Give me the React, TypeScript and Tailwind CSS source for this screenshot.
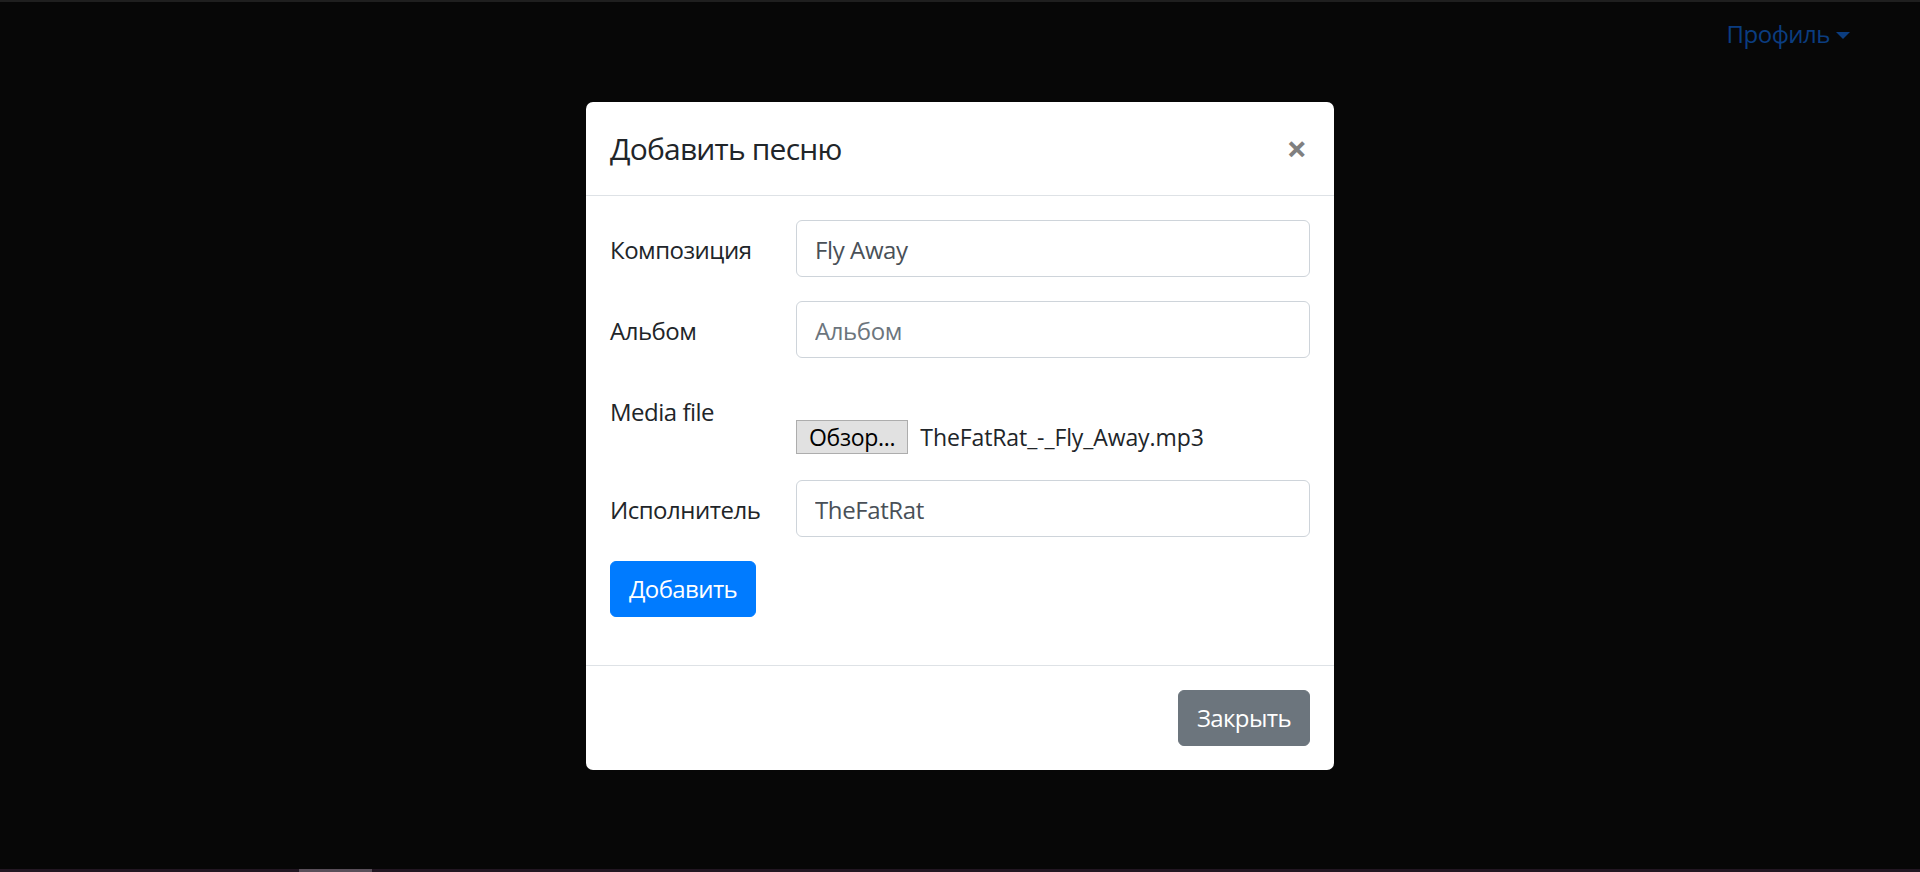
import { useState } from 'react'

const font = { fontFamily: '"Open Sans", "Noto Sans", sans-serif' }

interface RowProps {
  label: string
  children: React.ReactNode
}

function FormRow({ label, children }: RowProps) {
  return (
    <div className="flex mb-6">
      <label className="w-[186px] shrink-0 pt-[12px] text-[24px] leading-[36px] tracking-[-0.5px] text-[#212529]">
        {label}
      </label>
      <div className="flex-1">{children}</div>
    </div>
  )
}

function TextInput({
  value,
  placeholder,
  onChange,
}: {
  value: string
  placeholder: string
  onChange: (v: string) => void
}) {
  return (
    <input
      className="block w-full h-[57px] px-[18px] pt-[2px] text-[24px] leading-[36px] tracking-[-0.4px] text-[#495057] placeholder:text-[#6c757d] bg-white border border-[#ced4da] rounded-[6px] outline-none"
      style={font}
      value={value}
      placeholder={placeholder}
      onChange={(e) => onChange(e.target.value)}
    />
  )
}

export default function App() {
  const [form, setForm] = useState({
    title: 'Fly Away',
    album: '',
    artist: 'TheFatRat',
  })

  return (
    <div className="relative flex flex-col h-[872px] bg-[#070707] overflow-hidden" style={font}>
      <div className="h-[2px] bg-[#1f1f1f]" />

      {/* navbar under the backdrop */}
      <div className="flex justify-end pr-[70px] pt-[14px]">
        <a className="flex items-center text-[24px] leading-[36px] tracking-[-0.5px] text-[#0b3d80] cursor-pointer">
          Профиль
          <span className="ml-[6px] mt-[2px] w-0 h-0 border-x-[7px] border-x-transparent border-t-[7px] border-t-[#0b3d80]" />
        </a>
      </div>

      <div className="flex-1" />
      <div className="h-[3px] bg-[#221622]">
        <div className="ml-[299px] w-[73px] h-full bg-[#5a4f5a]" />
      </div>

      {/* modal */}
      <div className="absolute inset-0 flex items-center justify-center">
        <div className="w-[748px] bg-white rounded-[7px] flex flex-col">
          <div className="flex items-start justify-between px-6 py-6 border-b border-[#dee2e6]">
            <h5 className="text-[30px] leading-[45px] font-normal tracking-[-0.8px] text-[#212529]">
              Добавить песню
            </h5>
            <button className="text-[36px] leading-[36px] font-bold text-[#808080] mt-[5px] mr-[3px]">
              ×
            </button>
          </div>

          <div className="px-6 pt-6 pb-6">
            <form className="mb-6" onSubmit={(e) => e.preventDefault()}>
              <FormRow label="Композиция">
                <TextInput
                  value={form.title}
                  placeholder="Композиция"
                  onChange={(v) => setForm({ ...form, title: v })}
                />
              </FormRow>
              <FormRow label="Альбом">
                <TextInput
                  value={form.album}
                  placeholder="Альбом"
                  onChange={(v) => setForm({ ...form, album: v })}
                />
              </FormRow>
              <FormRow label="Media file">
                <div className="pt-[38px] pb-[2px] flex items-center">
                  <span className="h-[34px] px-[12px] flex items-center bg-[#e1e1e1] border border-[#adadad] text-[23px] tracking-[-0.3px] text-black">
                    Обзор...
                  </span>
                  <span className="ml-[12px] text-[23px] tracking-[-0.1px] text-[#212529]">
                    TheFatRat_-_Fly_Away.mp3
                  </span>
                </div>
              </FormRow>
              <FormRow label="Исполнитель">
                <TextInput
                  value={form.artist}
                  placeholder="Исполнитель"
                  onChange={(v) => setForm({ ...form, artist: v })}
                />
              </FormRow>
              <button
                type="submit"
                className="px-[18px] py-[9px] text-[24px] leading-[36px] tracking-[-0.6px] text-white bg-[#007bff] border border-[#007bff] rounded-[6px]"
              >
                Добавить
              </button>
            </form>
          </div>

          <div className="flex justify-end p-6 border-t border-[#dee2e6]">
            <button className="px-[18px] py-[9px] text-[24px] leading-[36px] tracking-[-0.6px] text-white bg-[#6c757d] border border-[#6c757d] rounded-[6px]">
              Закрыть
            </button>
          </div>
        </div>
      </div>
    </div>
  )
}
